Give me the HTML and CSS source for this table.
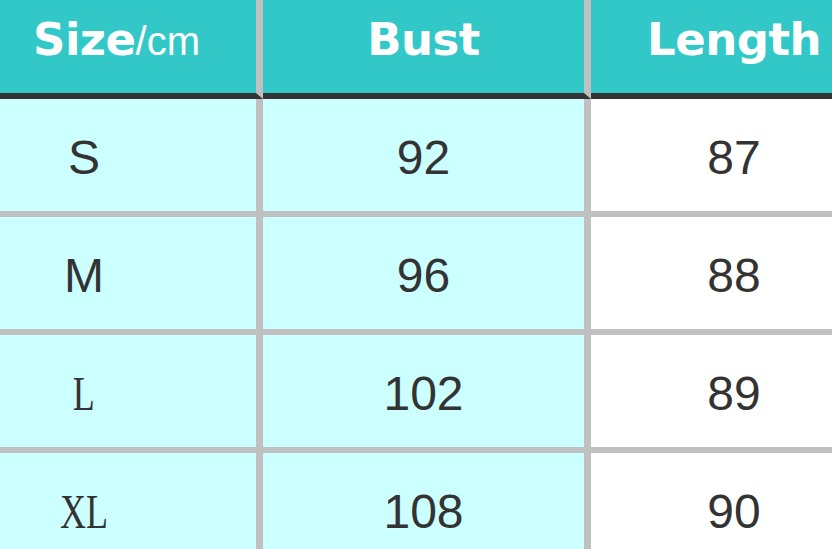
FILE: index.html
```html
<!DOCTYPE html>
<html>
<head>
<meta charset="utf-8">
<link rel="stylesheet" href="styles.css">
</head>
<body>
<table class="size-table">
  <thead>
    <tr>
      <th class="col-size"><span class="head-bold">Size</span><span class="unit">/cm</span></th>
      <th class="col-bust"><span class="head-bold">Bust</span></th>
      <th class="col-length"><span class="head-bold">Length</span></th>
    </tr>
  </thead>
  <tbody>
    <tr>
      <td class="col-size"><span class="sans">S</span></td>
      <td class="col-bust">92</td>
      <td class="col-length">87</td>
    </tr>
    <tr>
      <td class="col-size"><span class="sans">M</span></td>
      <td class="col-bust">96</td>
      <td class="col-length">88</td>
    </tr>
    <tr>
      <td class="col-size"><span class="serif">L</span></td>
      <td class="col-bust">102</td>
      <td class="col-length">89</td>
    </tr>
    <tr class="last">
      <td class="col-size"><span class="serif">XL</span></td>
      <td class="col-bust">108</td>
      <td class="col-length">90</td>
    </tr>
  </tbody>
</table>
</body>
</html>
```
FILE: styles.css
```css
html, body {
  margin: 0;
  padding: 0;
  overflow: hidden;
  background: #ffffff;
}

.size-table {
  border-collapse: separate;
  border-spacing: 0;
  table-layout: fixed;
  width: 832px;
}

.size-table th,
.size-table td {
  padding: 0;
  vertical-align: top;
  text-align: center;
  box-sizing: content-box;
}

.size-table th {
  background: #33c8c8;
  height: 76px;
  padding-top: 17px;
  border-bottom: 6px solid #333333;
  color: #ffffff;
  line-height: 1;
  white-space: nowrap;
}

.head-bold {
  font-family: "DejaVu Sans", sans-serif;
  font-weight: bold;
  font-size: 45px;
  letter-spacing: -0.5px;
}

.unit {
  font-family: "Liberation Sans", Arial, sans-serif;
  font-weight: normal;
  font-size: 40px;
}

.size-table td {
  height: 77px;
  padding-top: 35px;
  border-bottom: 6px solid #c0c0c0;
  font-family: "Liberation Sans", Arial, sans-serif;
  font-size: 48px;
  line-height: 1;
  color: #333333;
}

.size-table tr.last td {
  height: 61px;
  border-bottom: none;
}

.col-size {
  width: 256px;
  border-right: 7px solid #c0c0c0;
}

.size-table th.col-size {
  width: 233px;
  padding-right: 23px;
}

.size-table td.col-size {
  width: 168px;
  padding-right: 88px;
  background: #ccffff;
}

.col-bust {
  width: 321px;
  border-right: 7px solid #c0c0c0;
}

.size-table td.col-bust {
  background: #ccffff;
}

.size-table th.col-length,
.size-table td.col-length {
  width: 196px;
  padding-left: 45px;
}

.size-table td.col-length {
  background: #ffffff;
}

.sans {
  font-family: "Liberation Sans", Arial, sans-serif;
}

.serif {
  display: inline-block;
  font-family: "Liberation Serif", "Times New Roman", serif;
  font-size: 48px;
  transform: scaleX(0.75);
}
```
